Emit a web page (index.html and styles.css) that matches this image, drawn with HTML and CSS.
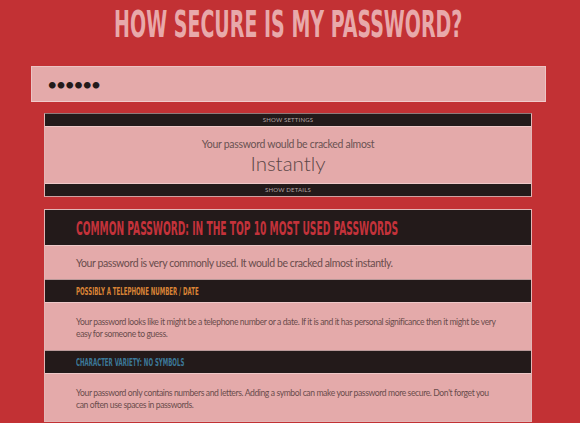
FILE: index.html
```html
<!DOCTYPE html>
<html lang="en">
<head>
    <meta charset="UTF-8">
    <title>How Secure Is My Password?</title>
    <link rel="stylesheet" href="styles.css">
</head>
<body>
    <div class="wrap">
        <h1 class="title"><span>How Secure Is My Password?</span></h1>

        <div class="pw-box">
            <input type="password" class="pw-input" value="123456">
        </div>

        <div class="result">
            <div class="toggle">Show settings</div>
            <div class="result-body">
                <p class="result-lead">Your password would be cracked almost</p>
                <p class="result-time">Instantly</p>
            </div>
            <div class="toggle">Show details</div>
        </div>

        <div class="checks">
            <div class="check-head big"><span class="red">Common Password: In the top 10 most used passwords</span></div>
            <div class="check-body big-text">Your password is very commonly used. It would be cracked almost instantly.</div>

            <div class="check-head"><span class="orange">Possibly a Telephone Number / Date</span></div>
            <div class="check-body">Your password looks like it might be a telephone number or a date. If it is and it has personal significance then it might be very easy for someone to guess.</div>

            <div class="check-head"><span class="blue">Character Variety: No Symbols</span></div>
            <div class="check-body">Your password only contains numbers and letters. Adding a symbol can make your password more secure. Don't forget you can often use spaces in passwords.</div>
        </div>
    </div>
</body>
</html>
```

FILE: styles.css
```css
body {
    margin: 0;
    background-color: #c23134;
    font-family: Lato, "Open Sans", sans-serif;
    overflow: hidden;
}

.wrap {
    width: 515px;
    margin-left: 31px;
}

.title {
    display: flex;
    justify-content: center;
    overflow: hidden;
    margin: 0;
    height: 66px;
    white-space: nowrap;
    font-family: "DejaVu Sans Condensed", "DejaVu Sans", sans-serif;
    font-weight: bold;
    font-size: 38px;
    line-height: 48px;
    color: #e8a9aa;
    text-transform: uppercase;
}

.title span {
    flex-shrink: 0;
    transform: scaleX(0.556);
}

.pw-box {
    height: 34px;
    background-color: #e4aaaa;
    border: 1px solid #ecc3c3;
    border-bottom-color: #f0cccc;
}

.pw-input {
    width: 100%;
    height: 100%;
    box-sizing: border-box;
    border: none;
    outline: none;
    background: transparent;
    padding: 0 15px;
    font-family: Lato, sans-serif;
    font-size: 18px;
    letter-spacing: -1.7px;
    color: #231a1a;
}

.result {
    margin: 11px 14px 12px 13px;
    border: 1px solid #d9a3a3;
    border-color: #8e7a7a #e2b6b6 #cfa0a0 #e2b6b6;
    background-color: #e4aaaa;
}

.toggle {
    height: 12px;
    line-height: 12px;
    background-color: #231a1a;
    color: #b5a6a6;
    text-align: center;
    text-transform: uppercase;
    font-size: 6px;
    letter-spacing: 0.2px;
}

.result-body {
    height: 56px;
    border-top: 1px solid #eec8c8;
    border-bottom: 1px solid #eec8c8;
    text-align: center;
    color: #6a5252;
}

.result-body p {
    margin: 0;
}

.result-lead {
    padding-top: 10px;
    font-size: 10.5px;
    letter-spacing: -0.3px;
    line-height: 14px;
}

.result-time {
    font-size: 20.5px;
    line-height: 24px;
    font-weight: 300;
    color: #5b4646;
}

.checks {
    margin: 0 14px 0 13px;
    border: 1px solid #e2b6b6;
    background-color: #e4aaaa;
}

.check-head {
    height: 22px;
    line-height: 23px;
    padding-left: 31px;
    overflow: hidden;
    background-color: #231a1a;
    border-top: 1px solid #b99999;
    white-space: nowrap;
    font-family: "DejaVu Sans Condensed", "DejaVu Sans", sans-serif;
    font-weight: bold;
    text-transform: uppercase;
    font-size: 11px;
}

.check-head span {
    display: inline-block;
    transform: scaleX(0.55);
    transform-origin: left center;
}

.check-head.big {
    height: 35px;
    line-height: 36px;
    font-size: 19px;
    border-top: none;
}

.check-head.big span {
    transform: scaleX(0.535);
}

.red { color: #c4323a; }
.orange { color: #d98336; }
.blue { color: #3c7898; }

.check-body {
    padding: 13px 32px 10px 31px;
    border-top: 1px solid #eec8c8;
    font-size: 8.6px;
    letter-spacing: -0.4px;
    line-height: 12px;
    color: #6a4c4c;
    min-height: 24px;
}

.check-body.big-text {
    padding: 10px 32px 9px 31px;
    min-height: 14px;
    font-size: 10.5px;
    letter-spacing: -0.4px;
    line-height: 14px;
}
```
